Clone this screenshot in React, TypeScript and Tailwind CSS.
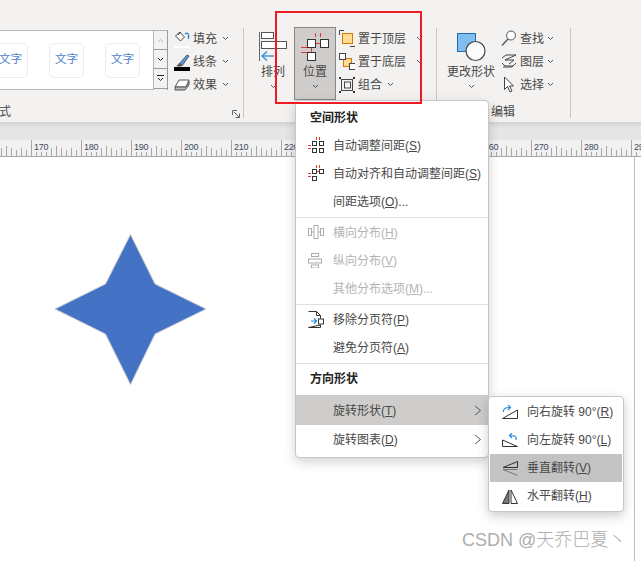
import React from "react";

const Chev = ({ c = "#555", w = 7 }: { c?: string; w?: number }) => (
  <svg width={w} height="5" viewBox="0 0 7 5" className="shrink-0"><path d="M1 1l2.5 2.5L6 1" fill="none" stroke={c} strokeWidth="1" /></svg>
);

const I = ({ w = 16, h = 16, children }: { w?: number; h?: number; children: React.ReactNode }) => (
  <svg width={w} height={h} viewBox={`0 0 ${w} ${h}`} className="shrink-0" fill="none">{children}</svg>
);

const FillIcon = () => (
  <I h={18}><rect x="0" y="16" width="16" height="2" fill="#fff" /><path d="M5.5 2l5 5-4 4-5-5z" fill="#fff" stroke="#444" /><path d="M4 5l3-3" stroke="#444" /><path d="M11 4c2.5-2 4 0 3.5 3" stroke="#2b7cd3" strokeWidth="1.3" /><path d="M14.5 6v3" stroke="#2b7cd3" strokeWidth="1.3" /></I>
);
const LineIcon = () => (
  <I h={18}><path d="M5 11l8-9 2 1-7 10z" fill="#5a9bd5" stroke="#345" strokeWidth=".8" /><path d="M2 13c2 0 2-3 4-3l2 2c-1 2-3 2-6 1z" fill="#555" /><rect y="14" width="16" height="4" fill="#000" /></I>
);
const EffectIcon = () => (
  <I h={18}><path d="M1 11l4-7h10l-3 7z" fill="#fff" stroke="#555" /><path d="M1 11v3h10l4-5V5l-3 6z" fill="#bbb" stroke="#555" /></I>
);
const ArrangeIcon = () => (
  <I w={30} h={30}>
    <path d="M1.500 0v29" stroke="#666" />
    <rect x="3.500" y="0.500" width="12" height="6" fill="#fff" stroke="#555" />
    <rect x="3.500" y="9.500" width="25" height="7" fill="#fff" stroke="#555" />
    <path d="M4 24h12" stroke="#2b88d8" strokeWidth="1.300" />
    <path d="M9 19.500L4 24l5 4.500" stroke="#2b88d8" strokeWidth="1.300" />
  </I>
);
const PositionIcon = () => (
  <I w={31} h={29}>
    <path d="M15.500 0v4M20.500 0v4M1 14.500h6M1 19.500h6M16 10.500h4M11.500 15v4" stroke="#e3342f" />
    <rect x="7.500" y="6.500" width="8" height="8" fill="#fff" stroke="#333" />
    <rect x="20.500" y="6.500" width="8" height="8" fill="#fff" stroke="#333" />
    <rect x="7.500" y="19.500" width="8" height="8" fill="#fff" stroke="#333" />
  </I>
);
const TopIcon = () => (
  <I h={17}><path d="M.5 5V.5H5M11 16.500h5.500V11" stroke="#444" /><rect x="3.500" y="3.500" width="10" height="10" fill="#ffdc8f" stroke="#d97706" /></I>
);
const BottomIcon = () => (
  <I h={17}><rect x="4.500" y="5.500" width="8" height="8" fill="#ffdc8f" stroke="#d97706" /><rect x=".5" y=".5" width="6" height="6" fill="#fff" stroke="#444" /><rect x="10.500" y="10.500" width="6" height="6" fill="#fff" stroke="#444" /></I>
);
const GroupIcon = () => (
  <I h={16}>
    <rect x="2.500" y="2.500" width="11" height="11" stroke="#444" />
    <rect x="5.500" y="5" width="6" height="6" stroke="#444" />
    <path d="M0 0h2v2H0zM14 0h2v2h-2zM0 14h2v2H0zM14 14h2v2h-2z" fill="#333" />
  </I>
);
const ShapeIcon = () => (
  <I w={30} h={30}>
    <rect x="1.500" y="1.500" width="18" height="18" fill="#82bdf0" stroke="#1f6cb5" />
    <circle cx="19.500" cy="19" r="9.500" fill="#fbfbfb" stroke="#444" strokeWidth="1.200" />
  </I>
);
const FindIcon = () => (
  <I h={17}><circle cx="10" cy="5.500" r="4.500" fill="#fff" stroke="#555" /><path d="M7 9L1 15.500" stroke="#555" strokeWidth="1.300" /></I>
);
const LayerIcon = () => (
  <I h={16}><path d="M1 4l4-3h10l-11 5h9l-5 4M1 9l3 3h8l3-3" stroke="#444" /><path d="M2 13h9l3-3" stroke="#444" /></I>
);
const SelectIcon = () => (
  <I h={17}><path d="M3.500 1v12.500l3-3 2.500 5.500 2-1-2.500-5H12.500z" fill="#fff" stroke="#444" /></I>
);
const AutoIcon = () => (
  <I h={16}>
    <path d="M8.500 0v3M11.500 0v3M0 8.500h3M0 11.500h3" stroke="#e3342f" />
    <g stroke="#333"><rect x="4.500" y="4.500" width="4" height="4" /><rect x="11.500" y="4.500" width="4" height="4" /><rect x="4.500" y="11.500" width="4" height="4" /><rect x="11.500" y="11.500" width="4" height="4" /></g>
  </I>
);
const AlignAutoIcon = () => (
  <I h={16}>
    <path d="M8.500 0v3M11.500 0v3M0 8.500h3M0 11.500h3" stroke="#e3342f" />
    <path d="M9 6.500h2" stroke="#e3342f" />
    <g stroke="#333"><rect x="4.500" y="4.500" width="4" height="4" /><rect x="11.500" y="4.500" width="4" height="4" /><rect x="4.500" y="11.500" width="4" height="4" /></g>
  </I>
);
const DistHIcon = () => (
  <I h={14}><g stroke="#aaa"><rect x=".5" y="3.500" width="3" height="7" /><rect x="6" y=".5" width="4" height="13" /><rect x="12.500" y="3.500" width="3" height="7" /><path d="M3.500 7H6M10 7h2.500" /></g></I>
);
const DistVIcon = () => (
  <I h={15}><g stroke="#aaa"><rect x="3.500" y=".5" width="7" height="3" /><rect x=".5" y="6" width="13" height="4" /><rect x="3.500" y="12" width="7" height="3" /></g></I>
);
const PageIcon = () => (
  <I h={17}><path d="M.5.500h8l4 4v3M12.500 14v2.500H.5z" stroke="#333" /><path d="M8.500.500v4h4" stroke="#333" /><path d="M3 10h5M6 7.500L8.500 10 6 12.500" stroke="#1e88d8" strokeWidth="1.200" /><rect x="10.500" y="8" width="5" height="5" stroke="#333" /></I>
);
const RotRIcon = () => (
  <I h={14}><path d="M.5 13.500L15.500 5v8.500z" stroke="#333" /><path d="M1.500 7C1 3 4 2.500 8 2.500M6 0L8.500 2.500 6 5" stroke="#2b88d8" strokeWidth="1.200" /></I>
);
const RotLIcon = () => (
  <I h={14}><path d="M.5 13.500V7l15 6.500z" stroke="#333" /><path d="M14 7c1-4-2-4.500-6-4.500M10 0L7.500 2.500 10 5" stroke="#2b88d8" strokeWidth="1.200" /></I>
);
const FlipVIcon = () => (
  <I h={15}><path d="M15.500 .5L1 6.500h14.500z" stroke="#333" /><path d="M15.500 14.500L1 8.500h14.500" stroke="#777" /></I>
);
const FlipHIcon = () => (
  <I h={15}><path d="M7 1L.5 14.500H7z" fill="#777" stroke="#333" /><path d="M9 1l6.500 13.500H9z" stroke="#333" /></I>
);

const Cmd = ({ icon, label, chevGap = 5 }: { icon: React.ReactNode; label: string; chevGap?: number }) => (
  <div className="flex h-[23px] items-center text-xs leading-none text-[#484848]">
    <span className="flex w-[19px] shrink-0 items-center">{icon}</span>
    <span>{label}</span>
    <span style={{ marginLeft: chevGap }}><Chev /></span>
  </div>
);

const Sep = () => <div className="mt-[28px] h-[90px] w-px shrink-0 bg-[#c8c6c4]" />;

const Big = ({ icon, label, w, active }: { icon: React.ReactNode; label: string; w: string; active?: boolean }) => (
  <div className={`flex shrink-0 flex-col items-center ${w} ${active ? "h-[73px] border border-[#8a8886] bg-[#cfcdcb] pt-[4px]" : "h-[73px] pt-[5px]"}`}>
    <div className="flex h-[30px] items-center">{icon}</div>
    <div className="mt-[2px] text-xs leading-[17px] text-[#484848]">{label}</div>
    <div className="mt-[3px]"><Chev /></div>
  </div>
);

const Thumb = ({ cls }: { cls: string }) => (
  <div className={`flex h-[35px] w-[35px] shrink-0 items-center justify-center rounded-[5px] border border-[#ececf4] bg-white text-[11.500px] text-[#4f7fcf] ${cls}`}>文字</div>
);

const Ruler = () => {
  const majors = [170, 180, 190, 200, 210, 220, 0, 0, 0, 260, 270, 280, 290];
  const ticks: React.ReactNode[] = [];
  for (let x = 1; x < 641; x += 5) {
    const off = ((x - 31) % 50 + 50) % 50;
    const h = off === 0 ? 16 : off === 25 ? 10 : off % 10 === 0 ? 8 : 6;
    ticks.push(<rect key={x} x={x} y={16 - h} width="1" height={h} fill="#a6a6a6" />);
  }
  return (
    <div className="relative h-[17px] overflow-hidden border-b border-[#a8a8a8] bg-[#f1f1f1]">
      <svg width="641" height="16" className="absolute left-0 top-0">{ticks}</svg>
      <div className="relative ml-[31px] flex">
        {majors.map((m, i) => (
          <div key={i} className="h-[16px] w-[50px] shrink-0 pl-[3px] pt-[1px] text-[9px] leading-[13px] tracking-[-0.2px] text-[#3e4c5e]">
            {m > 0 && <span className="bg-[#f1f1f1]">{m}</span>}
          </div>
        ))}
      </div>
    </div>
  );
};

const Item = ({ icon, label, k, tail, disabled, active, arrow }: { icon?: React.ReactNode; label: string; k: string; tail?: string; disabled?: boolean; active?: boolean; arrow?: boolean }) => (
  <div className={`flex items-center text-xs ${active ? "h-[30px] bg-[#cfcdcb]" : "h-[28px]"} ${disabled ? "text-[#b4b4b4]" : "text-[#484848]"}`}>
    <span className="flex w-[37px] shrink-0 items-center pl-[12px]">{icon}</span>
    <span className="flex-1 pt-[2px]">{label}(<u>{k}</u>){tail}</span>
    {arrow && (
      <svg width="8" height="11" viewBox="0 0 8 11" className="mr-[6px]"><path d="M1 1l5.500 4.500L1 10" fill="none" stroke="#555" /></svg>
    )}
  </div>
);

const Header = ({ t }: { t: string }) => (
  <div className="flex h-[28px] items-center pl-[14px] pt-[2px] text-xs font-bold text-[#222]">{t}</div>
);

const Line = () => <div className="mx-0 mt-[2px] h-px bg-[#e1dfdd]" />;

const SubItem = ({ icon, label, k, active }: { icon: React.ReactNode; label: string; k: string; active?: boolean }) => (
  <div className={`flex h-[28px] items-center text-xs text-[#484848] ${active ? "bg-[#c3c3c3]" : ""}`}>
    <span className="flex w-[37px] shrink-0 items-center pl-[12px]">{icon}</span>
    <span>{label}(<u>{k}</u>)</span>
  </div>
);

export default function App() {
  return (
    <div className="relative h-[561px] w-[641px] overflow-hidden bg-white [font-family:'Liberation_Sans','Noto_Sans_CJK_SC',sans-serif]">
      {/* Ribbon */}
      <div className="flex h-[122px] bg-[#f3f2f1]">
        <div className="relative w-[243px] shrink-0">
          <div className="flex pl-0 pt-[27px]">
            <div className="mt-[3px] flex h-[60px] w-[154px] shrink-0 items-center gap-[21px] overflow-hidden border border-l-0 border-[#b5b5b5] bg-white">
              <Thumb cls="-ml-[7px]" />
              <Thumb cls="" />
              <Thumb cls="" />
            </div>
            <div className="mt-[3px] flex h-[60px] w-[14px] shrink-0 flex-col border-r border-[#9b9b9b] bg-[#f3f2f1]">
              <div className="flex h-[20px] items-center justify-center border-b border-[#9b9b9b] border-t border-t-[#b5b5b5]"><svg width="7" height="5" viewBox="0 0 7 5"><path d="M1 4l2.500-2.500L6 4" fill="none" stroke="#bbb" /></svg></div>
              <div className="flex h-[19px] items-center justify-center border-b border-[#9b9b9b]"><Chev c="#222" /></div>
              <div className="flex h-[20px] flex-col items-center justify-center gap-[1px] border-b border-[#9b9b9b]"><div className="h-px w-[7px] bg-[#222]" /><Chev c="#222" /></div>
            </div>
            <div className="ml-[6px] flex flex-col">
              <Cmd icon={<FillIcon />} label="填充" />
              <Cmd icon={<LineIcon />} label="线条" />
              <Cmd icon={<EffectIcon />} label="效果" />
            </div>
          </div>
          <div className="absolute bottom-[1px] left-[-1px] text-xs leading-[17px] text-[#484848]">式</div>
          <svg width="8" height="8" viewBox="0 0 8 8" className="absolute bottom-[4px] right-[3px]"><path d="M.5 5V.5H5M2 2l5 5M3.500 7.500h4v-4" fill="none" stroke="#666" /></svg>
        </div>
        <Sep />
        <div className="flex w-[192px] shrink-0 pt-[27px]">
          <div className="ml-[14px]"><Big icon={<ArrangeIcon />} label="排列" w="w-[30px]" /></div>
          <div className="ml-[6px]"><Big icon={<PositionIcon />} label="位置" w="w-[42px]" active /></div>
          <div className="ml-[3px] flex flex-col">
            <Cmd icon={<TopIcon />} label="置于顶层" chevGap={10} />
            <Cmd icon={<BottomIcon />} label="置于底层" chevGap={10} />
            <Cmd icon={<GroupIcon />} label="组合" chevGap={5} />
          </div>
        </div>
        <Sep />
        <div className="relative flex w-[133px] shrink-0 pt-[27px]">
          <div className="ml-[10px]"><Big icon={<ShapeIcon />} label="更改形状" w="w-[48px]" /></div>
          <div className="ml-[6px] flex flex-col">
            <Cmd icon={<FindIcon />} label="查找" chevGap={3} />
            <Cmd icon={<LayerIcon />} label="图层" chevGap={3} />
            <Cmd icon={<SelectIcon />} label="选择" chevGap={3} />
          </div>
          <div className="absolute bottom-[1px] left-[54px] text-xs leading-[17px] text-[#484848]">编辑</div>
        </div>
        <Sep />
      </div>

      {/* Grey band + ruler */}
      <div className="h-[18px] bg-[linear-gradient(#d2d2d2,#e6e6e6_6px)]" />
      <Ruler />

      {/* Canvas */}
      <div className="relative h-[404px] pl-[54px] pt-[77px]">
        <svg width="154" height="153" viewBox="54 234 154 153">
          <path d="M130.500 234.500L155 284l51 25-51 25-24.500 50.500L105.500 334 55 309l50.500-25z" fill="#4472c4" stroke="#c4c8d0" strokeWidth="1" />
        </svg>
        <div className="absolute bottom-0 left-[634px] top-0 w-px bg-[#bdbdbd]" />
        <div className="absolute left-[462px] top-[371px] whitespace-nowrap text-[18px] font-light leading-[24px] text-[#adadad]">CSDN @天乔巴夏丶</div>
      </div>

      {/* Dropdown menu */}
      <div className="absolute left-[295px] top-[100px] h-[358px] w-[194px] rounded-[4px] border border-[#c8c6c4] bg-white pt-[2px] shadow-[0_4px_12px_rgba(0,0,0,0.18)]">
        <Header t="空间形状" />
        <Item icon={<AutoIcon />} label="自动调整间距" k="S" />
        <Item icon={<AlignAutoIcon />} label="自动对齐和自动调整间距" k="S" />
        <Item label="间距选项" k="O" tail="..." />
        <Line />
        <Item icon={<DistHIcon />} label="横向分布" k="H" disabled />
        <Item icon={<DistVIcon />} label="纵向分布" k="V" disabled />
        <Item label="其他分布选项" k="M" tail="..." disabled />
        <Line />
        <Item icon={<PageIcon />} label="移除分页符" k="P" />
        <Item label="避免分页符" k="A" />
        <Line />
        <Header t="方向形状" />
        <div className="mt-[3px]">
          <Item label="旋转形状" k="T" active arrow />
          <Item label="旋转图表" k="D" arrow />
        </div>
      </div>

      {/* Sub menu */}
      <div className="absolute left-[488px] top-[396px] h-[116px] w-[136px] rounded-[4px] border border-[#c8c6c4] bg-white p-px shadow-[0_4px_12px_rgba(0,0,0,0.2)]">
        <SubItem icon={<RotRIcon />} label="向右旋转 90°" k="R" />
        <SubItem icon={<RotLIcon />} label="向左旋转 90°" k="L" />
        <SubItem icon={<FlipVIcon />} label="垂直翻转" k="V" active />
        <SubItem icon={<FlipHIcon />} label="水平翻转" k="H" />
      </div>

      {/* Red annotation */}
      <div className="absolute left-[275px] top-[11px] h-[93px] w-[147px] border-2 border-[#ed1c24]" />
    </div>
  );
}
